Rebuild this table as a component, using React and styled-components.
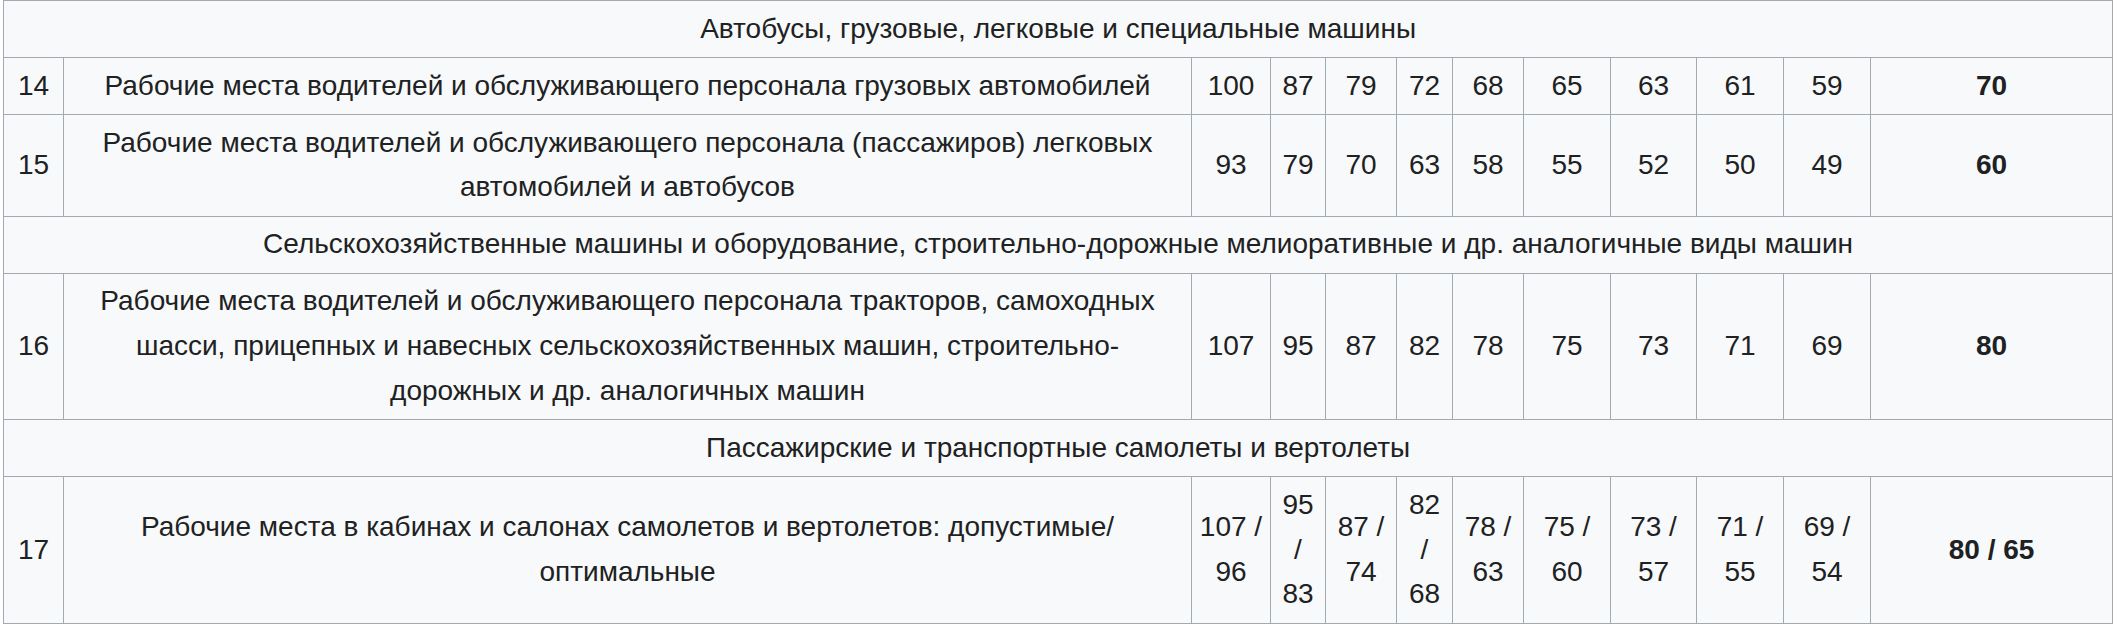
import styled, { createGlobalStyle } from "styled-components";

const GlobalStyle = createGlobalStyle`
  html, body {
    margin: 0;
    padding: 0;
    background: #ffffff;
  }
  body {
    font-family: "Liberation Sans", Arial, sans-serif;
    color: #202122;
  }
`;

const Wrap = styled.div`
  padding: 0 0 0 3px;
`;

const Table = styled.table`
  border-collapse: collapse;
  table-layout: fixed;
  width: 2110px;
  background: #f8f9fa;
  color: #202122;
  font-size: 28px;
  line-height: 1.6;
  border: 1px solid #a2a9b1;
`;

const Cell = styled.td`
  border: 1px solid #a2a9b1;
  padding: 5.6px 6px;
  text-align: center;
  vertical-align: middle;
  font-weight: ${(p) => (p.$bold ? 700 : 400)};
`;

const SectionCell = styled(Cell)`
  padding: 5.6px 11px;
`;

const DescCell = styled(Cell)`
  padding: 5.6px 11px;
`;

const colWidths = [60, 1128, 79, 55, 71, 56, 71, 87, 86, 87, 87, 242];

const sections = [
  {
    title: "Автобусы, грузовые, легковые и специальные машины",
    rows: [
      {
        n: "14",
        text: "Рабочие места водителей и обслуживающего персонала грузовых автомобилей",
        values: ["100", "87", "79", "72", "68", "65", "63", "61", "59"],
        total: "70",
      },
      {
        n: "15",
        text: "Рабочие места водителей и обслуживающего персонала (пассажиров) легковых автомобилей и автобусов",
        values: ["93", "79", "70", "63", "58", "55", "52", "50", "49"],
        total: "60",
      },
    ],
  },
  {
    title:
      "Сельскохозяйственные машины и оборудование, строительно-дорожные мелиоративные и др. аналогичные виды машин",
    rows: [
      {
        n: "16",
        text: "Рабочие места водителей и обслуживающего персонала тракторов, самоходных шасси, прицепных и навесных сельскохозяйственных машин, строительно-дорожных и др. аналогичных машин",
        values: ["107", "95", "87", "82", "78", "75", "73", "71", "69"],
        total: "80",
      },
    ],
  },
  {
    title: "Пассажирские и транспортные самолеты и вертолеты",
    rows: [
      {
        n: "17",
        text: (
          <>
            Рабочие места в кабинах и салонах самолетов и вертолетов: допустимые/
            <wbr />
            оптимальные
          </>
        ),
        values: [
          "107 / 96",
          "95 / 83",
          "87 / 74",
          "82 / 68",
          "78 / 63",
          "75 / 60",
          "73 / 57",
          "71 / 55",
          "69 / 54",
        ],
        total: "80 / 65",
      },
    ],
  },
];

export default function App() {
  return (
    <>
      <GlobalStyle />
      <Wrap>
        <Table>
          <colgroup>
            {colWidths.map((w, i) => (
              <col key={i} style={{ width: w }} />
            ))}
          </colgroup>
          <tbody>
            {sections.map((s) => [
              <tr key={s.title}>
                <SectionCell colSpan={12}>{s.title}</SectionCell>
              </tr>,
              ...s.rows.map((r) => (
                <tr key={r.n}>
                  <Cell>{r.n}</Cell>
                  <DescCell>{r.text}</DescCell>
                  {r.values.map((v, i) => (
                    <Cell key={i}>{v}</Cell>
                  ))}
                  <Cell $bold>{r.total}</Cell>
                </tr>
              )),
            ])}
          </tbody>
        </Table>
      </Wrap>
    </>
  );
}
